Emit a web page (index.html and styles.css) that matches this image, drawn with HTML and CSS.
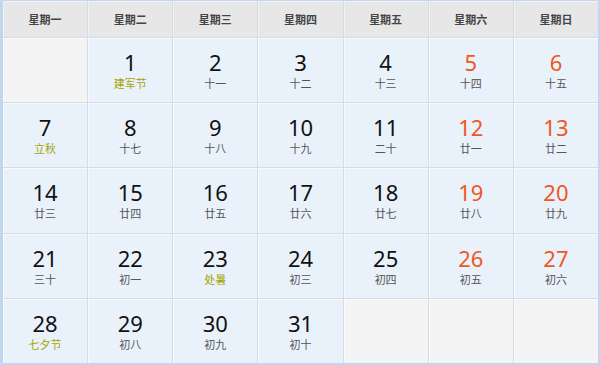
FILE: index.html
```html
<!DOCTYPE html>
<html lang="zh">
<head>
<meta charset="utf-8">
<link rel="stylesheet" href="styles.css">
</head>
<body>
<div class="cal">
  <div class="head">星期一</div>
  <div class="head">星期二</div>
  <div class="head">星期三</div>
  <div class="head">星期四</div>
  <div class="head">星期五</div>
  <div class="head">星期六</div>
  <div class="head">星期日</div>

  <div class="cell empty"></div>
  <div class="cell"><span class="num">1</span><span class="lun fest">建军节</span></div>
  <div class="cell"><span class="num">2</span><span class="lun">十一</span></div>
  <div class="cell"><span class="num">3</span><span class="lun">十二</span></div>
  <div class="cell"><span class="num">4</span><span class="lun">十三</span></div>
  <div class="cell"><span class="num we">5</span><span class="lun">十四</span></div>
  <div class="cell"><span class="num we">6</span><span class="lun">十五</span></div>

  <div class="cell"><span class="num">7</span><span class="lun fest">立秋</span></div>
  <div class="cell"><span class="num">8</span><span class="lun">十七</span></div>
  <div class="cell"><span class="num">9</span><span class="lun">十八</span></div>
  <div class="cell"><span class="num">10</span><span class="lun">十九</span></div>
  <div class="cell"><span class="num">11</span><span class="lun">二十</span></div>
  <div class="cell"><span class="num we">12</span><span class="lun">廿一</span></div>
  <div class="cell"><span class="num we">13</span><span class="lun">廿二</span></div>

  <div class="cell"><span class="num">14</span><span class="lun">廿三</span></div>
  <div class="cell"><span class="num">15</span><span class="lun">廿四</span></div>
  <div class="cell"><span class="num">16</span><span class="lun">廿五</span></div>
  <div class="cell"><span class="num">17</span><span class="lun">廿六</span></div>
  <div class="cell"><span class="num">18</span><span class="lun">廿七</span></div>
  <div class="cell"><span class="num we">19</span><span class="lun">廿八</span></div>
  <div class="cell"><span class="num we">20</span><span class="lun">廿九</span></div>

  <div class="cell"><span class="num">21</span><span class="lun">三十</span></div>
  <div class="cell"><span class="num">22</span><span class="lun">初一</span></div>
  <div class="cell"><span class="num">23</span><span class="lun fest">处暑</span></div>
  <div class="cell"><span class="num">24</span><span class="lun">初三</span></div>
  <div class="cell"><span class="num">25</span><span class="lun">初四</span></div>
  <div class="cell"><span class="num we">26</span><span class="lun">初五</span></div>
  <div class="cell"><span class="num we">27</span><span class="lun">初六</span></div>

  <div class="cell"><span class="num">28</span><span class="lun fest">七夕节</span></div>
  <div class="cell"><span class="num">29</span><span class="lun">初八</span></div>
  <div class="cell"><span class="num">30</span><span class="lun">初九</span></div>
  <div class="cell"><span class="num">31</span><span class="lun">初十</span></div>
  <div class="cell empty"></div>
  <div class="cell empty"></div>
  <div class="cell empty"></div>
</div>
</body>
</html>
```

FILE: styles.css
```css
html, body {
  margin: 0;
  padding: 0;
  background: #ffffff;
}

.cal {
  box-sizing: border-box;
  width: 600px;
  height: 365px;
  display: grid;
  grid-template-columns: repeat(7, 1fr);
  grid-template-rows: 36px repeat(5, 1fr);
  gap: 1px;
  background: #d3dce9;
  border-style: solid;
  border-color: #c3d6ef;
  border-width: 1px 2px 2px 3px;
  font-family: "Noto Sans", "Noto Sans CJK SC", sans-serif;
}

.head {
  display: flex;
  align-items: center;
  justify-content: center;
  background: #e7e7e7;
  box-shadow: inset 1px 1px 0 #f2f2f2;
  font-family: "Noto Sans CJK SC", sans-serif;
  font-weight: 700;
  font-size: 11px;
  color: #444444;
}

.cell {
  display: flex;
  flex-direction: column;
  align-items: center;
  justify-content: center;
  gap: 2px;
  background: #e9f2fb;
  box-shadow: inset 1px 1px 0 #f6faff;
}

.cell.empty {
  background: #f4f4f4;
  box-shadow: inset 1px 1px 0 #fafafa;
}

.num {
  font-size: 22px;
  line-height: 24px;
  color: #111111;
}

.num.we {
  color: #f0581e;
}

.lun {
  font-family: "Noto Sans CJK SC", sans-serif;
  font-size: 11px;
  line-height: 14px;
  color: #555555;
}

.lun.fest {
  color: #a6a300;
}
```
